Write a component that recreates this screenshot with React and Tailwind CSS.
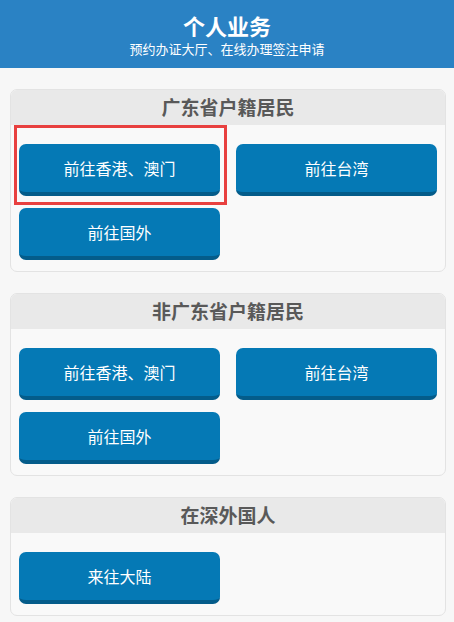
const groups = [
  { title: '广东省户籍居民', items: ['前往香港、澳门', '前往台湾', '前往国外'], mark: true },
  { title: '非广东省户籍居民', items: ['前往香港、澳门', '前往台湾', '前往国外'] },
  { title: '在深外国人', items: ['来往大陆'] },
]

function Btn({ label, marked }) {
  return (
    <div className="relative">
      <button className="w-full h-[52px] rounded-[7px] bg-[#0579b5] border-b-[4px] border-[#045c8a] text-white text-[16px] leading-none">
        {label}
      </button>
      {marked && (
        <div className="absolute left-[-5px] top-[-19px] right-[-7px] bottom-[-9px] border-[3px] border-[#e8403f] pointer-events-none" />
      )}
    </div>
  )
}

export default function App() {
  return (
    <div
      className="w-[454px] min-h-[622px] bg-[#f7f7f7]"
      style={{ fontFamily: '"Microsoft YaHei", "Noto Sans CJK SC", sans-serif' }}
    >
      {/* 顶部标题栏 */}
      <div className="h-[68px] bg-[#2a82c4] text-white flex flex-col items-center pt-[13px]">
        <h1 className="text-[22px] font-bold leading-[24px]">个人业务</h1>
        <p className="mt-[4px] text-[13px] leading-[16px]">预约办证大厅、在线办理签注申请</p>
      </div>

      <div className="pl-[10px] pr-[8px] pt-[21px] flex flex-col gap-[21px]">
        {groups.map((g) => (
          <div key={g.title} className="border border-[#e3e3e3] rounded-[7px] bg-[#f9f9f9] overflow-hidden">
            <div className="h-[35px] bg-[#e9e9e9] flex items-center justify-center text-[19px] font-bold text-[#595959]">
              {g.title}
            </div>
            <div className="grid grid-cols-2 gap-x-[16px] gap-y-[12px] px-[8px] pt-[19px] pb-[11px]">
              {g.items.map((it, i) => (
                <Btn key={it} label={it} marked={g.mark && i === 0} />
              ))}
            </div>
          </div>
        ))}
      </div>
    </div>
  )
}
